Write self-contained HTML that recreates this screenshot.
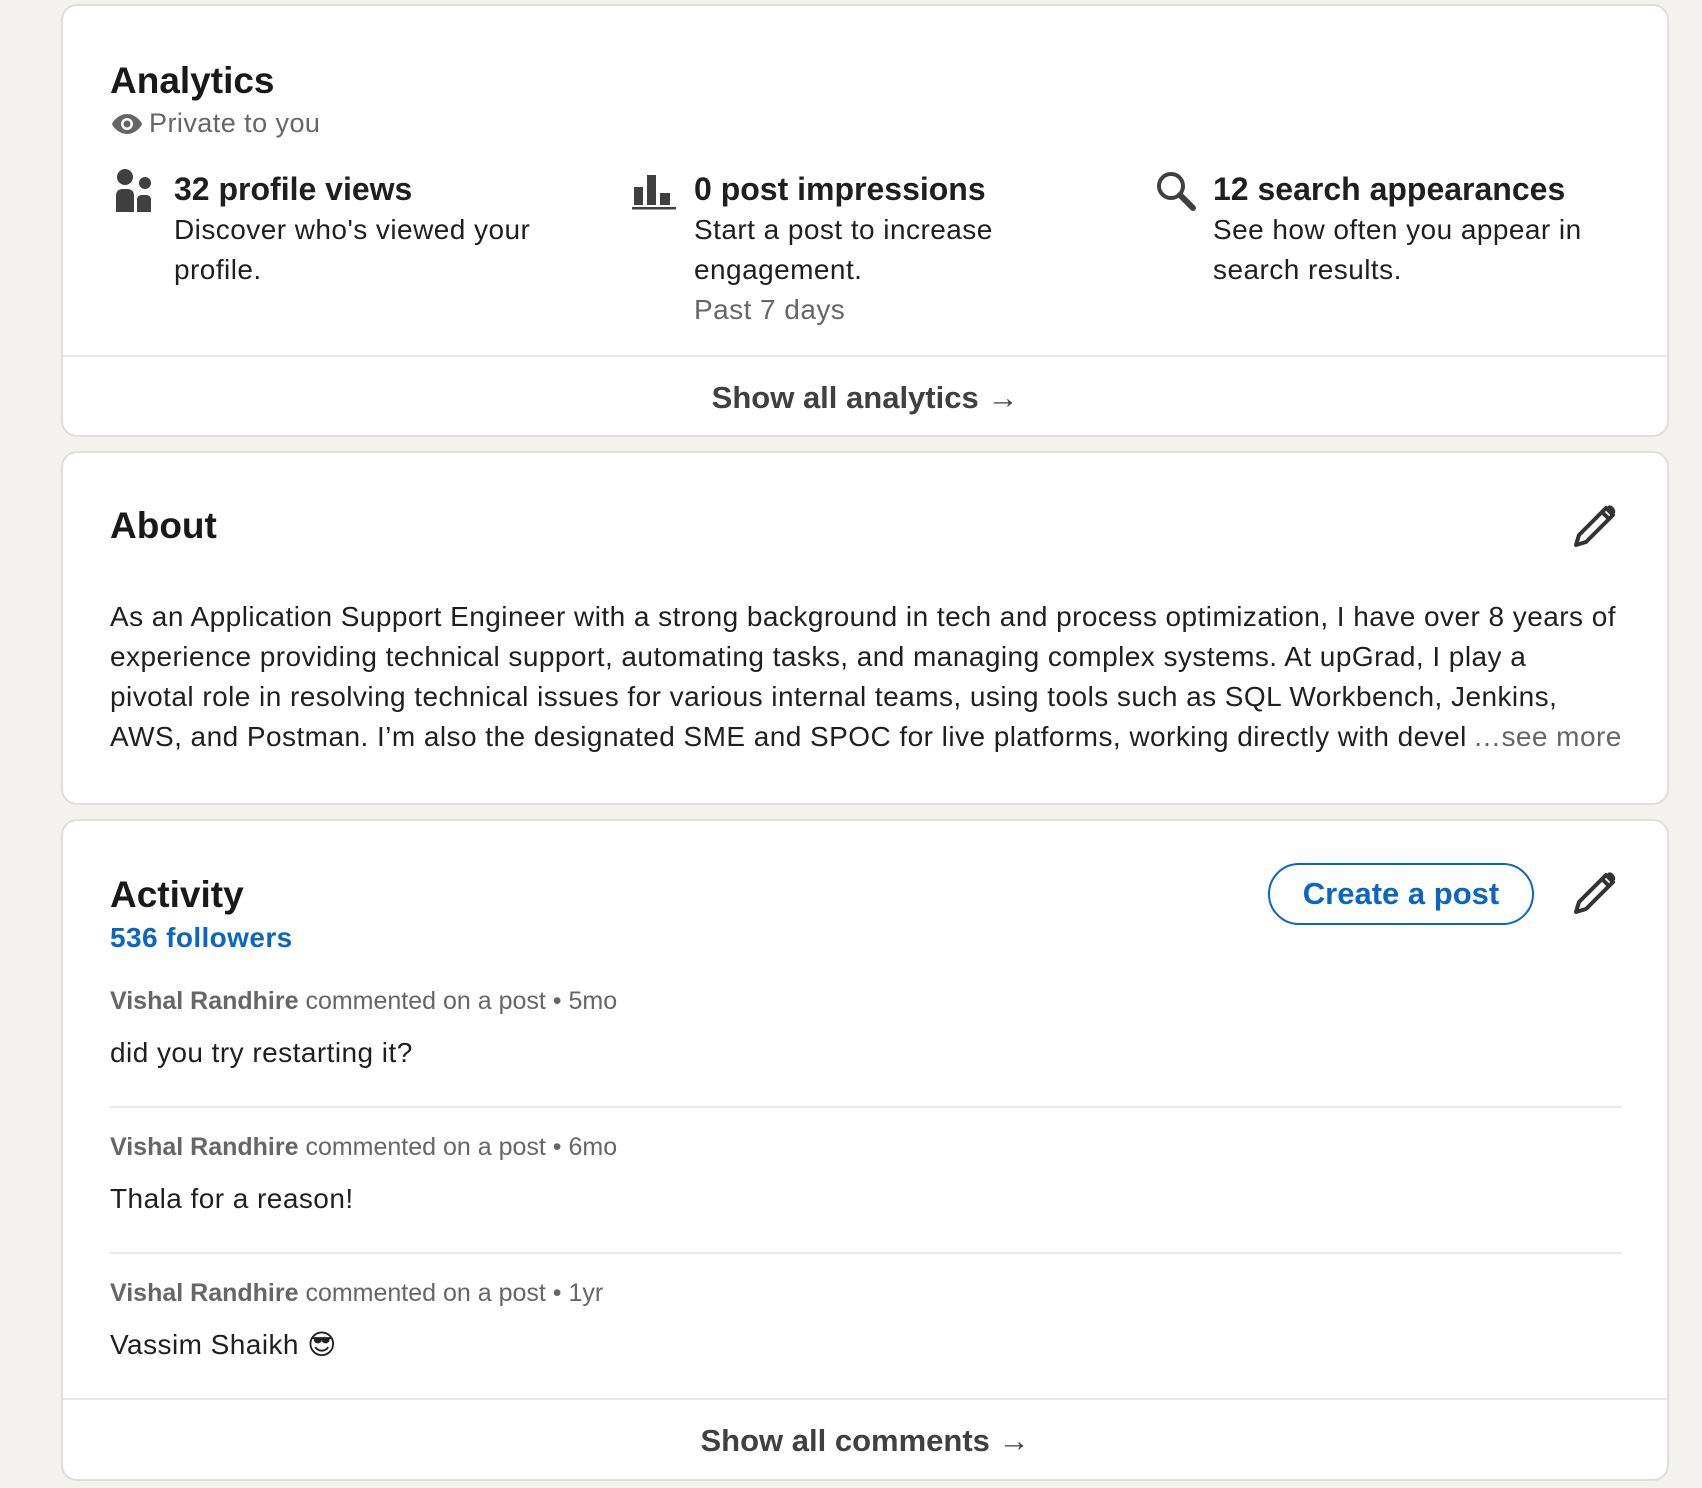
<!DOCTYPE html>
<html><head><meta charset="utf-8">
<style>
*{margin:0;padding:0;box-sizing:border-box}
html,body{width:1702px;height:1488px;overflow:hidden;background:#f4f2ee;font-family:"Liberation Sans","DejaVu Sans",sans-serif;color:#1f1f1f}
.card{position:absolute;left:61px;width:1608px;background:#fff;border:2px solid #dfdeda;border-radius:16px;overflow:hidden}
.a{position:absolute;white-space:nowrap}
.h{font-size:37px;font-weight:bold;color:#191919;line-height:44px}
.st{font-size:32px;font-weight:bold;line-height:40px;color:#1f1f1f}
.b{font-size:28px;letter-spacing:0.45px;line-height:40px;color:#1f1f1f}
.g{color:#666}
.m{font-size:25px;letter-spacing:0px;line-height:32px;color:#666}
.m b{color:#666}
.hr{position:absolute;height:2px;background:#e8e8e8}
.foot{position:absolute;left:0;right:0;text-align:center;font-size:31px;font-weight:bold;color:#404040;line-height:40px}
</style></head><body>

<div class="card" style="top:4px;height:433px">
  <div class="a h" style="left:47px;top:53px">Analytics</div>
  <svg class="a" style="left:48px;top:107px" width="32" height="22" viewBox="0 0 32 22"><path d="M16 1C8 1 2 8 1 11c1 3 7 10 15 10s14-7 15-10C30 8 24 1 16 1z" fill="#666"/><circle cx="16" cy="11" r="6" fill="#fff"/><circle cx="16" cy="11" r="3.5" fill="#666"/></svg>
  <div class="a b g" style="left:86px;top:97px;font-size:27px">Private to you</div>

  <svg class="a" style="left:52px;top:162px" width="38" height="44" viewBox="0 0 38 44"><circle cx="10" cy="9" r="8" fill="#404040"/><circle cx="30" cy="15" r="6" fill="#404040"/><path d="M1 44V28q0-7 7-7h4q7 0 7 7v16z" fill="#404040"/><path d="M22 44V32q0-5 5-5h4q5 0 5 5v12z" fill="#404040"/></svg>
  <div class="a st" style="left:111px;top:163px">32 profile views</div>
  <div class="a b" style="left:111px;top:204px">Discover who's viewed your</div>
  <div class="a b" style="left:111px;top:244px">profile.</div>

  <svg class="a" style="left:569px;top:166px" width="44" height="38" viewBox="0 0 44 38"><rect x="2" y="15" width="9" height="18" fill="#404040"/><rect x="15" y="3" width="9" height="30" fill="#404040"/><rect x="28" y="21" width="10" height="12" fill="#404040"/><rect x="0" y="35" width="44" height="2.5" fill="#404040"/></svg>
  <div class="a st" style="left:631px;top:163px">0 post impressions</div>
  <div class="a b" style="left:631px;top:204px">Start a post to increase</div>
  <div class="a b" style="left:631px;top:244px">engagement.</div>
  <div class="a b g" style="left:631px;top:284px">Past 7 days</div>

  <svg class="a" style="left:1092px;top:164px" width="42" height="42" viewBox="0 0 42 42"><circle cx="16" cy="16" r="12" fill="none" stroke="#404040" stroke-width="4"/><path d="M25 25l13 13" stroke="#404040" stroke-width="6" stroke-linecap="round"/></svg>
  <div class="a st" style="left:1150px;top:163px">12 search appearances</div>
  <div class="a b" style="left:1150px;top:204px">See how often you appear in</div>
  <div class="a b" style="left:1150px;top:244px">search results.</div>

  <div class="hr" style="left:0;right:0;top:349px"></div>
  <div class="foot" style="top:372px">Show all analytics →</div>
</div>

<div class="card" style="top:451px;height:354px">
  <div class="a h" style="left:47px;top:51px">About</div>
  <svg class="a" style="left:1510px;top:51px" width="44" height="44" viewBox="0 0 44 44"><path d="M33 4l7 7L13 38 3 41l3-10z" fill="none" stroke="#333" stroke-width="4" stroke-linejoin="round"/><path d="M29 8l7 7" stroke="#333" stroke-width="4"/><path d="M33 4l7 7 2-2q1-3-2-6t-5-1z" fill="#333"/></svg>
  <div class="a b" style="left:47px;top:144px">As an Application Support Engineer with a strong background in tech and process optimization, I have over 8 years of</div>
  <div class="a b" style="left:47px;top:184px">experience providing technical support, automating tasks, and managing complex systems. At upGrad, I play a</div>
  <div class="a b" style="left:47px;top:224px">pivotal role in resolving technical issues for various internal teams, using tools such as SQL Workbench, Jenkins,</div>
  <div class="a b" style="left:47px;top:264px;width:1356px;overflow:hidden">AWS, and Postman. I’m also the designated SME and SPOC for live platforms, working directly with developers</div>
  <div class="a b g" style="left:1410px;top:264px">…see more</div>
</div>

<div class="card" style="top:819px;height:662px">
  <div class="a h" style="left:47px;top:52px">Activity</div>
  <div class="a" style="left:47px;top:99px;font-size:28px;letter-spacing:0.4px;font-weight:bold;color:#0a66c2;line-height:36px">536 followers</div>
  <div class="a" style="left:1205px;top:42px;width:266px;height:62px;border:2.5px solid #0a66c2;border-radius:31px;color:#0a66c2;font-size:31px;font-weight:bold;text-align:center;line-height:57px">Create a post</div>
  <svg class="a" style="left:1510px;top:50px" width="44" height="44" viewBox="0 0 44 44"><path d="M33 4l7 7L13 38 3 41l3-10z" fill="none" stroke="#333" stroke-width="4" stroke-linejoin="round"/><path d="M29 8l7 7" stroke="#333" stroke-width="4"/><path d="M33 4l7 7 2-2q1-3-2-6t-5-1z" fill="#333"/></svg>

  <div class="a m" style="left:47px;top:164px"><b>Vishal Randhire</b> commented on a post • 5mo</div>
  <div class="a b" style="left:47px;top:212px">did you try restarting it?</div>
  <div class="hr" style="left:47px;width:1512px;top:285px"></div>
  <div class="a m" style="left:47px;top:310px"><b>Vishal Randhire</b> commented on a post • 6mo</div>
  <div class="a b" style="left:47px;top:358px">Thala for a reason!</div>
  <div class="hr" style="left:47px;width:1512px;top:431px"></div>
  <div class="a m" style="left:47px;top:456px"><b>Vishal Randhire</b> commented on a post • 1yr</div>
  <div class="a b" style="left:47px;top:504px">Vassim Shaikh 😎</div>
  <div class="hr" style="left:0;right:0;top:577px"></div>
  <div class="foot" style="top:600px">Show all comments →</div>
</div>
</body></html>
